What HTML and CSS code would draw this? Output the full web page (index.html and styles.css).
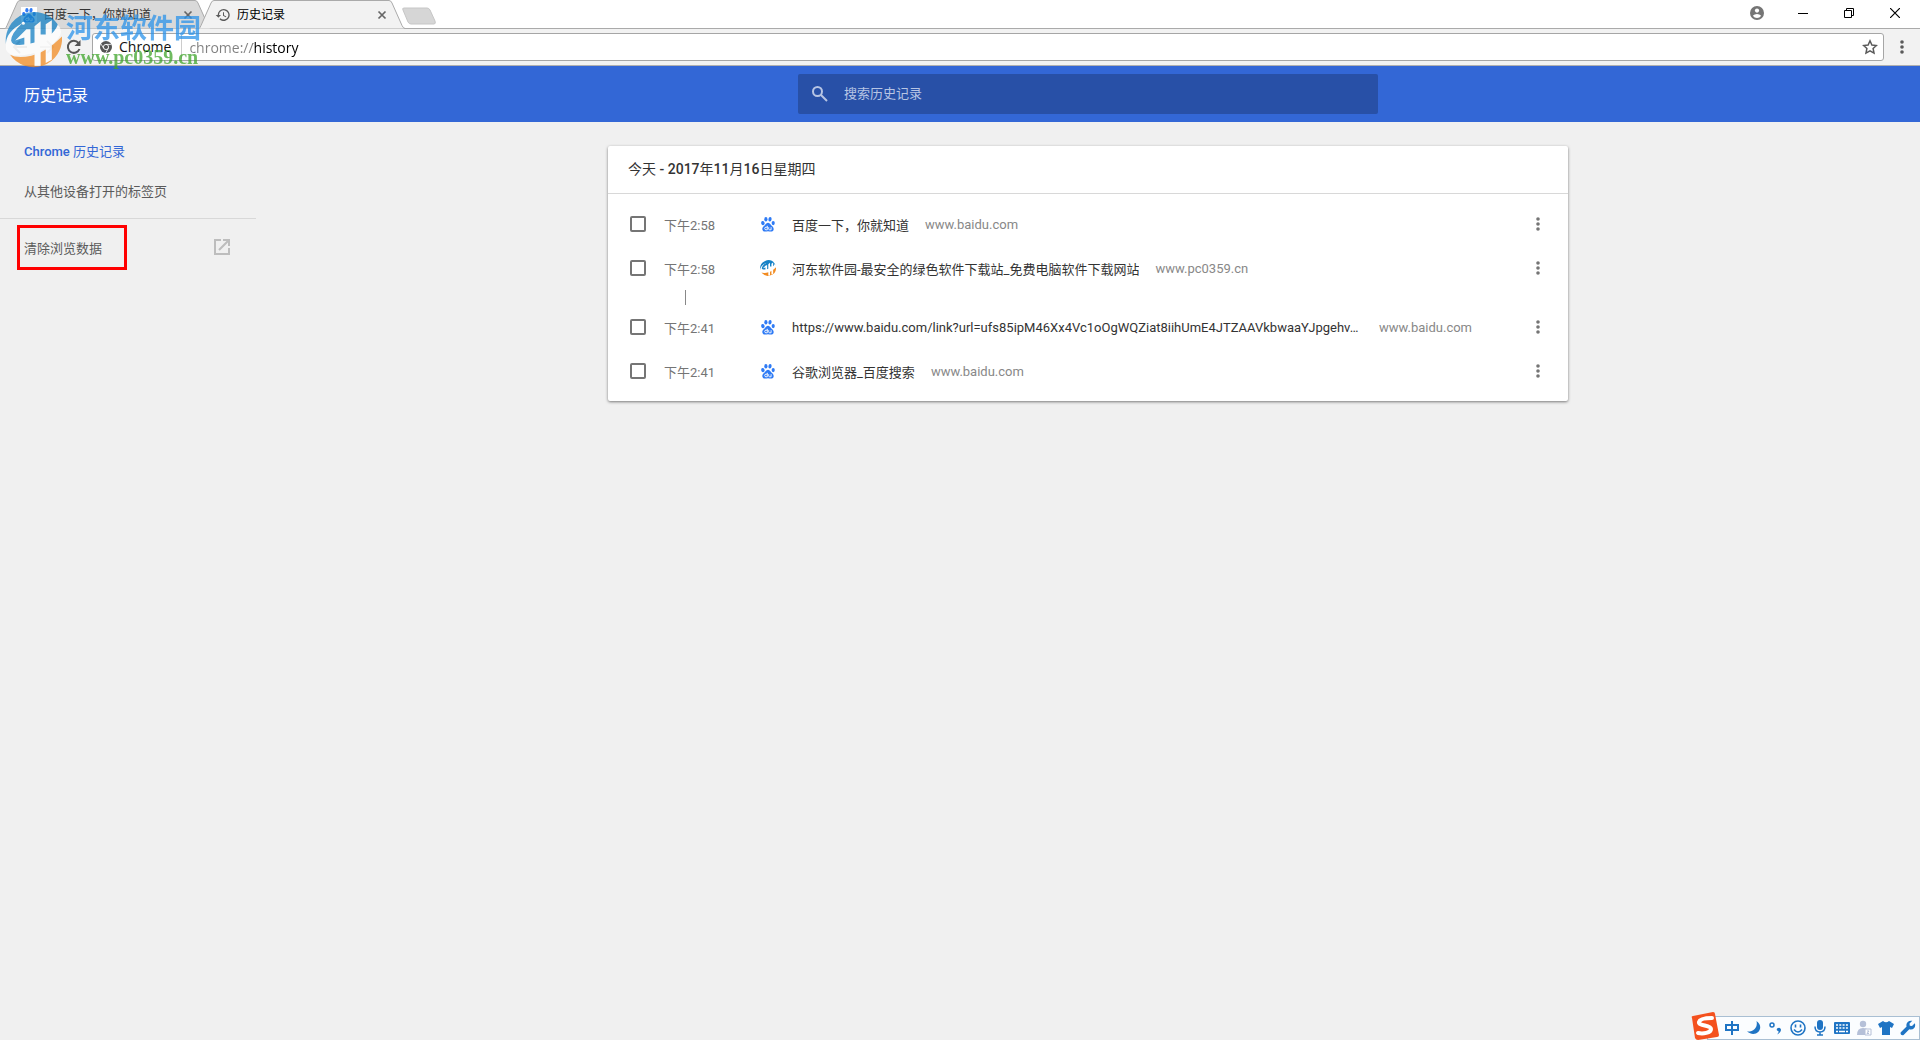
FILE: index.html
```html
<!DOCTYPE html>
<html lang="zh-CN">
<head>
<meta charset="utf-8">
<title>历史记录</title>
<link rel="stylesheet" href="styles.css">
</head>
<body>
<svg class="defs" aria-hidden="true">
  <symbol id="paw" viewBox="0 0 16 16">
    <g fill="#2f7bf5"><ellipse cx="2.9" cy="7.1" rx="1.7" ry="2.1" transform="rotate(-12 2.9 7.1)"/><ellipse cx="5.9" cy="3.3" rx="1.6" ry="2.3"/><ellipse cx="10" cy="3.3" rx="1.6" ry="2.3" transform="rotate(10 10 3.3)"/><ellipse cx="13.2" cy="7.1" rx="1.6" ry="2.1"/><path d="M8 6.7c1.4 0 2 1 2.8 2.1 1 1.3 2.9 2.2 2.9 4.2 0 1.800-1.300 2.600-2.700 2.600-1.200 0-2-.3-3-.3s-1.800.3-3 .3c-1.500 0-2.700-1-2.700-2.600 0-2 1.900-2.900 2.900-4.200C6 7.700 6.600 6.700 8 6.700z"/></g>
    <path d="M7.300 9.800v4h-1.300a1.300 1.300 0 010-2.600h1.300M8.700 11.200v1.700q0 .9.900.9h1.500v-2.600" fill="none" stroke="#fff" stroke-width=".9"/>
  </symbol>
  <symbol id="hedong" viewBox="0 0 56 56">
    <path fill="#1682c6" d="M1 33A28 28 0 0 1 51 12Q56 18 50 23L28 33Q10 40 1 33z"/>
    <path fill="#f28c22" d="M56 25A28 28 0 0 1 5 43Q12 47 26 44T56 25z"/>
    <path fill="#fff" d="M1 31Q2 20 17 12 6 22 6 29q1 7 19 3 22-5 27-19Q58 21 52 27 43 38 26 42 5 47 1 38z"/>
    <path fill="#fff" d="M10 29 21 18H25V35H19V26zM29 15 35 10V23H40V13L46 9V48L40 51V33H35V54H29z"/>
    <circle cx="18" cy="12" r="1.500" fill="#fff"/>
  </symbol>
  <symbol id="dots" viewBox="0 0 16 16"><circle cx="8" cy="3" r="1.800"/><circle cx="8" cy="8" r="1.800"/><circle cx="8" cy="13" r="1.800"/></symbol>
  <symbol id="cross" viewBox="0 0 10 10"><path d="M1.500 1.500l7 7m0-7l-7 7" stroke="#666" stroke-width="1.700"/></symbol>
  <symbol id="tabshape" viewBox="0 0 206 29"><path d="M0 28.500Q1 28 2 25.500L12 3Q13 .5 15 .5H190Q192 .5 193 3L203 25.500Q204 28 206 28.500" stroke="#aaa"/></symbol>
</svg>

<div class="tabstrip">
  <div class="tab">
    <svg class="tab-bg"><use href="#tabshape"/></svg>
    <span class="tab-icon tab-icon-white"><svg width="16" height="16"><use href="#paw"/></svg></span>
    <span class="tab-title">百度一下，你就知道</span>
    <button class="tab-close" aria-label="关闭"><svg width="10" height="10"><use href="#cross"/></svg></button>
  </div>
  <div class="tab tab-active">
    <svg class="tab-bg"><use href="#tabshape"/></svg>
    <span class="tab-icon"><svg width="16" height="16" viewBox="0 0 24 24" fill="#5a5a5a"><path d="M13 3a9 9 0 0 0-9 9H1l3.900 3.900.1.100L9 12H6a7 7 0 1 1 2.100 4.900l-1.400 1.500A9 9 0 1 0 13 3zm-1 5v5l4.300 2.500.7-1.200-3.500-2.100V8z"/></svg></span>
    <span class="tab-title">历史记录</span>
    <button class="tab-close" aria-label="关闭"><svg width="10" height="10"><use href="#cross"/></svg></button>
  </div>
  <button class="newtab" aria-label="新标签页"><svg width="36" height="18" viewBox="0 0 36 18"><path d="M3 1H26Q28 1 29 3L34 14Q35 17 33 17H10Q8 17 7 15L2 3Q1 1 3 1z" fill="#d6d6d6" stroke="#c6c6c6"/></svg></button>
  <div class="window-buttons">
    <button aria-label="用户"><svg width="14" height="14" viewBox="0 0 14 14"><circle cx="7" cy="7" r="7" fill="#757575"/><circle cx="7" cy="4.600" r="2.100" fill="#fff"/><path d="M2.800 9.700Q4.500 8 7 8t4.200 1.700Q9.600 12 7 12T2.800 9.700z" fill="#fff"/></svg></button>
    <button aria-label="最小化"><svg width="10" height="10"><path d="M0 5.500H10" stroke="#000"/></svg></button>
    <button aria-label="还原"><svg width="10" height="10" fill="none" stroke="#000"><path d="M.5 2.500H7.500V9.500H.5zM2.500 2.500V.5H9.500V7.500H7.500"/></svg></button>
    <button aria-label="关闭窗口"><svg width="10" height="10"><path d="M0 0L10 10M10 0L0 10" stroke="#000" stroke-width="1.200"/></svg></button>
  </div>
</div>

<div class="toolbar">
  <button class="nav-button" aria-label="后退"><svg width="16" height="16" fill="none" stroke="#bbb" stroke-width="2"><path d="M15 8H2M8 2L2 8l6 6"/></svg></button>
  <button class="nav-button" aria-label="前进"><svg width="16" height="16" fill="none" stroke="#d6d6d6" stroke-width="2"><path d="M1 8h13M8 2l6 6-6 6"/></svg></button>
  <button class="nav-button" aria-label="重新加载"><svg width="16" height="16" viewBox="0 0 16 16"><path d="M13.500 10A6 6 0 1 1 12.500 4" fill="none" stroke="#555" stroke-width="2"/><path d="M14.500 1v6h-6z" fill="#555"/></svg></button>
  <div class="omnibox">
    <svg width="12" height="12" viewBox="0 0 12 12"><circle cx="6" cy="6" r="6" fill="#555"/><circle cx="6" cy="6" r="2.600" fill="#555" stroke="#fff" stroke-width=".9"/><path d="M6 3.400H11.300M3.700 7.300L1 3M8.300 7.300L5.700 12" stroke="#fff" stroke-width=".8"/></svg>
    <span class="chip">Chrome</span>
    <input class="address" type="text" value="chrome://history" aria-label="地址">
    <button class="star" aria-label="收藏"><svg width="16" height="16" viewBox="0 0 16 16"><path d="M8 1.800L9.900 6l4.500.500-3.300 3 .9 4.600L8 11.800 4 14.100l.9-4.600-3.300-3L6.100 6z" fill="none" stroke="#5a5a5a" stroke-width="1.500"/></svg></button>
  </div>
  <button class="menu-button" aria-label="菜单"><svg width="16" height="16" fill="#5a5a5a"><use href="#dots"/></svg></button>
</div>

<header class="app-header">
  <h1>历史记录</h1>
  <div class="search-area">
    <label class="search">
      <svg width="24" height="24" viewBox="0 0 24 24" fill="none" stroke="#b7c5e4" stroke-width="2"><circle cx="9.500" cy="9.500" r="4.500"/><path d="M13 13l6 6"/></svg>
      <input type="search" placeholder="搜索历史记录" aria-label="搜索历史记录">
    </label>
  </div>
</header>

<div class="content">
  <nav class="sidebar">
    <a class="nav-item nav-current" href="#history"><span><b>Chrome</b> 历史记录</span></a>
    <a class="nav-item" href="#synced">从其他设备打开的标签页</a>
    <hr>
    <a class="nav-item nav-clear" href="#clear"><span>清除浏览数据</span>
      <svg width="16" height="16" fill="none" stroke="#bdbdbd" stroke-width="2"><path d="M7 1H1v14h14V9M9 1h6v6M15 1L5 11"/></svg></a>
    <div class="highlight"></div>
  </nav>
  <main>
    <section class="card">
      <h2>今天 <b>- 2017</b>年<b>11</b>月<b>16</b>日星期四</h2>
      <ul>
        <li><input type="checkbox" aria-label="百度一下，你就知道"><time>下午2:58</time><svg class="favicon"><use href="#paw"/></svg><a href="#1">百度一下，你就知道</a><span class="domain">www.baidu.com</span><button aria-label="操作"><svg width="16" height="16"><use href="#dots"/></svg></button></li>
        <li><input type="checkbox" aria-label="河东软件园"><time>下午2:58</time><svg class="favicon"><use href="#hedong"/></svg><a href="#2">河东软件园-最安全的绿色软件下载站_免费电脑软件下载网站</a><span class="domain">www.pc0359.cn</span><button aria-label="操作"><svg width="16" height="16"><use href="#dots"/></svg></button></li>
        <li class="time-gap" role="separator"></li>
        <li><input type="checkbox" aria-label="www.baidu.com"><time>下午2:41</time><svg class="favicon"><use href="#paw"/></svg><a class="title-long" href="#3">https://www.baidu.com/link?url=ufs85ipM46Xx4Vc1oOgWQZiat8iihUmE4JTZAAVkbwaaYJpgehv…</a><span class="domain">www.baidu.com</span><button aria-label="操作"><svg width="16" height="16"><use href="#dots"/></svg></button></li>
        <li><input type="checkbox" aria-label="谷歌浏览器_百度搜索"><time>下午2:41</time><svg class="favicon"><use href="#paw"/></svg><a href="#4">谷歌浏览器_百度搜索</a><span class="domain">www.baidu.com</span><button aria-label="操作"><svg width="16" height="16"><use href="#dots"/></svg></button></li>
      </ul>
    </section>
  </main>
</div>

<div class="watermark">
  <svg width="57" height="57"><use href="#hedong"/></svg>
  <div class="watermark-text"><span class="wm-name">河东软件园</span><span class="wm-url">www.pc0359.cn</span></div>
</div>

<div class="ime">
  <svg class="ime-logo" width="28" height="28" viewBox="0 0 28 28"><path d="M1 6Q0 4 2 4L22 0Q24 0 24 2L28 23Q28 25 26 25L7 28Q5 28 4 26z" fill="#f4511e"/><path d="M21 6Q9 6 8 10c-1 4 12 3 12 7 0 4-8 5-13 4" fill="none" stroke="#fff" stroke-width="4" stroke-linecap="round"/></svg>
  <div class="ime-bar">
    <svg viewBox="0 0 16 16" fill="none" stroke="#1f74c4" stroke-width="2"><path d="M2 5h12v5H2zM8 1v14"/></svg>
    <svg viewBox="0 0 16 16" fill="#1f74c4"><path d="M10.500 1c9 6 0 18-9.500 10.500C8 12 12 7 10.500 1z"/></svg>
    <svg viewBox="0 0 16 16"><circle cx="4" cy="5" r="2" fill="none" stroke="#1f74c4" stroke-width="1.500"/><path d="M9 8.500q3-2 4 1 0 3-4 5 2-2 1.500-3.500Q8 10.500 9 8.500z" fill="#1f74c4"/></svg>
    <svg viewBox="0 0 16 16" fill="none" stroke="#1f74c4" stroke-width="1.600"><circle cx="8" cy="8" r="7"/><path d="M5.500 4.500v3m5-3v3M4 9.500q4 5 8 0"/></svg>
    <svg viewBox="0 0 16 16"><rect x="5" y="0" width="6" height="10" rx="3" fill="#1f74c4"/><path d="M3 6.500q0 5.500 5 5.500t5-5.500M8 12v3M5 15h6" fill="none" stroke="#1f74c4" stroke-width="1.500"/></svg>
    <svg viewBox="0 0 16 16"><rect y="2" width="16" height="12" rx="1" fill="#1f74c4"/><path d="M2 5h12M2 8h12" stroke="#fff" stroke-width="1.600" stroke-dasharray="2 1.300"/><path d="M2 11.500h2m1 0h6m1 0h2" stroke="#fff" stroke-width="1.500"/></svg>
    <svg viewBox="0 0 16 16"><circle cx="7" cy="4" r="3.200" fill="#b5c0d8"/><path d="M1 15Q1 8 7 8q4 0 5 2v5z" fill="#b5c0d8"/><path d="M9 9h6v6H9zM11 11h2l-2 2.500h2" fill="#fff" stroke="#b5c0d8"/></svg>
    <svg viewBox="0 0 16 16" fill="#1f74c4"><path d="M5 1q3 2.500 6 0l5 3-2 4-2-1v8H4V7L2 8 0 4z"/></svg>
    <svg viewBox="0 0 16 16" fill="#1f74c4"><path d="M14.800 3.200L12 6 9.800 5.700 9.500 3.500 12.300.8C8.500 0 5.500 3 6.600 6.600L.8 12.200c-1 2 1 3.800 2.800 2.800L9.300 9.200c4 1.200 7-2 5.500-6z"/></svg>
  </div>
</div>
</body>
</html>
```
FILE: styles.css
```css
* { box-sizing: border-box; }
body {
  margin: 0;
  min-height: 100vh;
  background: #f0f0f0;
  color: #333;
  font-family: Roboto, "Noto Sans CJK SC", sans-serif;
  font-size: 13px;
}
svg { display: block; flex: none; }
button { border: 0; padding: 0; background: none; display: flex; align-items: center; justify-content: center; }
input { font: inherit; }
a { color: inherit; text-decoration: none; }
b { font-weight: 500; }
.defs { position: absolute; width: 0; height: 0; }

/* Browser frame */
.tabstrip {
  display: flex;
  height: 29px;
  padding-left: 5px;
  background: #fff;
  box-shadow: inset 0 -1px #aaa;
}
.tab {
  position: relative;
  display: flex;
  align-items: center;
  width: 206px;
  padding: 0 18px 0 16px;
  margin-right: -12px;
  color: #333;
  font-size: 12px;
}
.tab-active { z-index: 1; color: #000; }
.tab-bg { position: absolute; left: 0; top: 0; width: 206px; height: 29px; fill: #d9d9d9; }
.tab-active .tab-bg { fill: #f2f2f2; }
.tab-icon, .tab-title, .tab-close { position: relative; }
.tab-icon-white { background: #fff; }
.tab-title { flex: 1; padding-left: 6px; line-height: 24px; white-space: nowrap; }
.newtab { margin-left: 8px; height: 31px; }
.window-buttons { display: flex; height: 22px; margin-left: auto; padding-right: 2px; }
.window-buttons button { width: 46px; height: 26px; }

.toolbar {
  display: flex;
  align-items: center;
  height: 37px;
  padding: 0 10px 0 6px;
  background: #f2f2f2;
  border-bottom: 1px solid #b0b0b0;
}
.nav-button { width: 28px; height: 28px; margin-right: -1px; }
.omnibox {
  flex: 1;
  display: flex;
  align-items: center;
  height: 28px;
  margin-left: 5px;
  padding: 0 5px 0 7px;
  background: #fff;
  border: 1px solid #a6a6a6;
  border-radius: 3px;
  font-family: "Open Sans", "Noto Sans CJK SC", sans-serif;
  font-size: 14px;
}
.chip { padding: 0 10px 0 7px; line-height: 24px; color: #111; border-right: 1px solid #ccc; }
.address {
  flex: 1;
  min-width: 0;
  padding: 0 0 0 7px;
  border: 0;
  outline: 0;
  color: transparent;
  background: linear-gradient(to right, #808080 71px, #000 71px);
  background-clip: text;
}
.menu-button { width: 16px; margin-left: 10px; }

/* History app */
.app-header { display: flex; align-items: center; height: 56px; background: #3367d6; color: #fff; }
.app-header h1 { width: 256px; margin: 0; padding-left: 24px; font-size: 16px; font-weight: 400; }
.search-area { flex: 1; display: flex; justify-content: center; }
.search {
  display: flex;
  align-items: center;
  width: 580px;
  height: 40px;
  padding-left: 10px;
  gap: 12px;
  background: #2850a7;
  border-radius: 2px;
}
.search input { flex: 1; padding: 0 0 2px; border: 0; outline: 0; background: none; color: #fff; }
.search input::placeholder { color: #b7c5e4; }

.content { display: flex; }
.sidebar { position: relative; width: 256px; padding-top: 8px; color: #5a5a5a; }
.nav-item { display: flex; align-items: center; justify-content: space-between; height: 40px; padding: 0 26px 0 24px; }
.nav-current { color: #3367d6; }
.sidebar hr { height: 1px; margin: 8px 0; border: 0; background: #d8d8d8; }
.highlight { position: absolute; left: 17px; top: 103px; width: 110px; height: 45px; border: 3px solid #f00; }

main { flex: 1; padding: 24px; }
.card {
  max-width: 960px;
  margin: 0 auto;
  background: #fff;
  border-radius: 2px;
  box-shadow: 0 1px 3px rgba(0, 0, 0, .5);
}
.card h2 {
  margin: 0;
  padding: 0 20px 1px;
  border-bottom: 1px solid #d8d8d8;
  font-size: 14px;
  font-weight: 400;
  line-height: 46px;
}
.card ul { list-style: none; margin: 0; padding: 8px 22px; }
.card li { display: flex; align-items: center; height: 44px; }
.card li.time-gap { width: 1px; height: 15px; margin-left: 55px; background: #888; }
.card input {
  appearance: none;
  width: 16px;
  height: 16px;
  margin: 0;
  border: 2px solid #757575;
  border-radius: 2px;
}
.card time { width: 96px; margin-left: 18px; color: #757575; }
.favicon { width: 16px; height: 16px; margin-right: 16px; }
.card li a { max-width: 571px; overflow: hidden; white-space: nowrap; text-overflow: ellipsis; }
.card li .title-long { width: 571px; }
.domain { margin-left: 16px; color: #888; }
.card li button { width: 16px; height: 16px; margin-left: auto; fill: #757575; }

/* Overlays */
.watermark {
  position: absolute;
  left: 5px;
  top: 11px;
  z-index: 2;
  display: flex;
  gap: 4px;
  opacity: .75;
  pointer-events: none;
}
.watermark-text { display: flex; flex-direction: column; white-space: nowrap; }
.wm-name { font-size: 27px; font-weight: 700; line-height: 36px; color: #2b93ea; }
.wm-url { font-family: "Liberation Serif", serif; font-size: 20px; font-weight: 700; line-height: 20px; color: #3fa52b; }
.ime { position: fixed; right: 0; bottom: 0; display: flex; align-items: flex-end; }
.ime-logo { position: relative; margin-right: -12px; }
.ime-bar {
  display: flex;
  align-items: center;
  gap: 6px;
  height: 24px;
  padding: 0 3px 0 16px;
  background: #fbfdff;
  border: 1px solid #a9bfd3;
}
.ime-bar svg { width: 16px; height: 16px; }
```
